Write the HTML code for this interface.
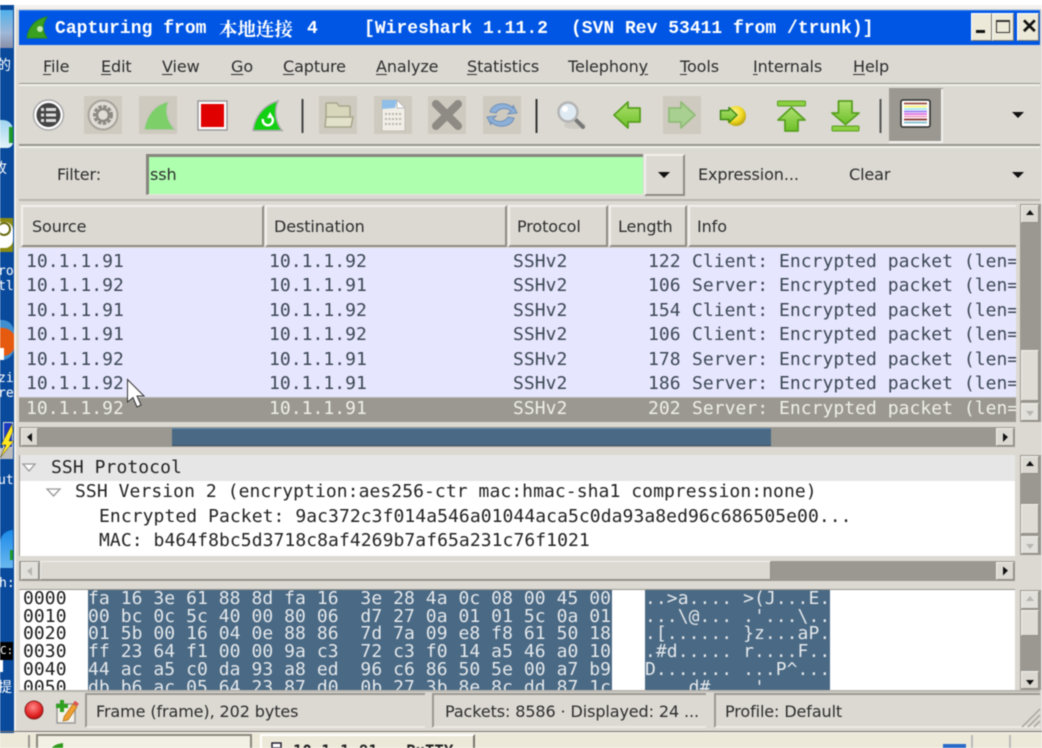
<!DOCTYPE html>
<html><head><meta charset="utf-8">
<style>
html,body{margin:0;padding:0;background:#fff}
#r{position:relative;width:1042px;height:748px;overflow:hidden;background:#fff;filter:blur(.45px);font-family:"DejaVu Sans","Liberation Sans",sans-serif;font-size:16px;color:#2c2c2c}
#r div,#r pre,#r span.a{position:absolute;margin:0}
.u{white-space:pre;line-height:20px;letter-spacing:-.1px}
u{text-underline-offset:2px}
pre.m{font-family:"DejaVu Sans Mono","Liberation Mono",monospace;font-size:18px;letter-spacing:.04px;line-height:24.5px}
pre.h{font-family:"DejaVu Sans Mono","Liberation Mono",monospace;font-size:18px;letter-spacing:.06px;line-height:17.7px}
.b{background:#dcd9d3;box-sizing:border-box;border:1px solid;border-color:#f2f0ec #8e8c84 #8e8c84 #f2f0ec}
.s{color:#efefe9}
.w{background:#ece9d8;box-sizing:border-box;border:1px solid;border-color:#fff #77756c #77756c #fff}
</style></head><body><div id="r">
<!-- desktop -->
<div style="left:0;top:5px;width:14px;height:728px;background:#0a4a9c"></div>
<div style="left:0;top:10px;width:13px;height:38px;background:linear-gradient(#4fb0ea,#9fb8d8 60%,#8a90a8)"></div>
<div class="u" style="left:-3px;top:55px;color:#fff;font:14px 'Noto Sans CJK SC',sans-serif">的</div>
<div style="left:0;top:120px;width:13px;height:28px;background:linear-gradient(#9ed4ee,#e4f2fa);border-radius:0 10px 6px 0"></div>
<div style="left:9px;top:127px;width:4px;height:16px;background:#1d9a2a"></div>
<div class="u" style="left:-7px;top:158px;color:#fff;font:14px 'Noto Sans CJK SC',sans-serif">收</div>
<div style="left:0;top:218px;width:13px;height:34px;background:#8a8a14"></div>
<div style="left:0;top:222px;width:13px;height:26px;background:#fff;border-radius:0 8px 8px 0"></div>
<div style="left:-3px;top:222px;width:14px;height:14px;border:2px solid #6a6a10;border-radius:50%;background:#fff;box-sizing:border-box"></div>
<pre class="m" style="left:-2px;top:264px;color:#fff;font-size:13px;line-height:15px">ro
tl</pre>
<div style="left:0;top:320px;width:14px;height:40px;background:radial-gradient(circle at 2px 22px,#e65a10 55%,#3f8fd0 58%);border-radius:0 12px 12px 0"></div>
<div style="left:0;top:348px;width:4px;height:12px;background:#fff"></div>
<pre class="m" style="left:-2px;top:371px;color:#fff;font-size:13px;line-height:15px">zi
re</pre>
<div style="left:3px;top:422px;width:10px;height:26px;background:#1a3ac0;border:1px solid #ddd;box-sizing:border-box"></div>
<div style="left:0;top:448px;width:13px;height:11px;background:#bbb"></div>
<pre class="m" style="left:-2px;top:473px;color:#fff;font-size:13px;line-height:15px">ut</pre>
<div style="left:0;top:530px;width:13px;height:38px;background:linear-gradient(#1c8ae8,#6ab8ef);border-radius:13px 0 0 0"></div>
<div style="left:10px;top:550px;width:3px;height:10px;background:#1d9a2a"></div>
<pre class="m" style="left:-1px;top:576px;color:#fff;font-size:13px;line-height:15px">h:</pre>
<div style="left:0;top:642px;width:13px;height:18px;background:#000"></div>
<pre class="m" style="left:0;top:643px;color:#fff;font-size:11px;line-height:15px">C:\</pre>
<div style="left:0;top:660px;width:3px;height:12px;background:#fff"></div>
<div class="u" style="left:-2px;top:677px;color:#fff;font:14px 'Noto Sans CJK SC',sans-serif">提</div>
<!-- window -->
<div style="left:14px;top:5px;width:1028px;height:728px;background:#f4f2ee"></div>
<div style="left:16px;top:9px;width:1026px;height:722px;background:#dcd9d3"></div>
<div style="left:19px;top:10px;width:1021px;height:35px;background:#0056e4;border-top:1px solid #2a78ee;box-sizing:border-box"></div>
<pre style="left:55px;top:18px;color:#fff;font:bold 18px/22px 'Liberation Mono',monospace;letter-spacing:.02px">Capturing from</pre>
<div style="left:219px;top:16px;color:#fff;font:bold 18.5px/26px 'Noto Serif CJK SC',serif;white-space:pre">本地连接</div>
<pre style="left:307px;top:18px;color:#fff;font:bold 18px/22px 'Liberation Mono',monospace">4</pre>
<pre style="left:364px;top:18px;color:#fff;font:bold 18px/22px 'Liberation Mono',monospace;letter-spacing:.02px">[Wireshark 1.11.2</pre>
<pre style="left:571px;top:18px;color:#fff;font:bold 18px/22px 'Liberation Mono',monospace;letter-spacing:0">(SVN Rev 53411 from /trunk)]</pre>
<div class="w" style="left:971px;top:13px;width:21px;height:28px"></div>
<div class="w" style="left:992px;top:13px;width:22px;height:28px"></div>
<div class="w" style="left:1017px;top:13px;width:22px;height:28px"></div>
<div style="left:976px;top:30px;width:9px;height:3px;background:#111"></div>
<div style="left:996px;top:20px;width:14px;height:13px;border:1px solid #333;border-top-width:2px;box-sizing:border-box"></div>
<div style="left:1021px;top:15px;font:bold 20px/24px 'Liberation Sans',sans-serif;color:#111">✕</div>
<!-- menu -->
<div style="left:19px;top:83px;width:1021px;height:1px;background:#98968e"></div>
<div style="left:19px;top:84px;width:1021px;height:2px;background:#f0eeea"></div>
<div style="left:19px;top:144px;width:1021px;height:2px;background:#98968e"></div>
<div style="left:19px;top:146px;width:1021px;height:2px;background:#f0eeea"></div>
<div style="left:19px;top:199px;width:1021px;height:2px;background:#b8b5ae"></div>
<div class="u" style="left:43px;top:57px"><u>F</u>ile</div>
<div class="u" style="left:101px;top:57px"><u>E</u>dit</div>
<div class="u" style="left:162px;top:57px"><u>V</u>iew</div>
<div class="u" style="left:231px;top:57px"><u>G</u>o</div>
<div class="u" style="left:283px;top:57px"><u>C</u>apture</div>
<div class="u" style="left:376px;top:57px"><u>A</u>nalyze</div>
<div class="u" style="left:467px;top:57px"><u>S</u>tatistics</div>
<div class="u" style="left:568px;top:57px">Telephon<u>y</u></div>
<div class="u" style="left:680px;top:57px"><u>T</u>ools</div>
<div class="u" style="left:753px;top:57px"><u>I</u>nternals</div>
<div class="u" style="left:853px;top:57px"><u>H</u>elp</div>
<!-- filter -->
<div class="u" style="left:57px;top:165px">Filter:</div>
<div style="left:146px;top:154px;width:497px;height:41px;background:#aeffae;box-sizing:border-box;border-top:3px solid #87857d;border-left:3px solid #87857d;border-bottom:1px solid #e8e6e0"></div>
<div class="u" style="left:150px;top:165px">ssh</div>
<div class="b" style="left:644px;top:154px;width:41px;height:42px;border-width:2px"></div>
<div class="u" style="left:698px;top:165px">Expression...</div>
<div class="u" style="left:849px;top:165px">Clear</div>
<!-- header -->
<div class="b" style="left:21px;top:205px;width:243px;height:42px;border-width:2px"></div>
<div class="b" style="left:265px;top:205px;width:242px;height:42px;border-width:2px"></div>
<div class="b" style="left:508px;top:205px;width:100px;height:42px;border-width:2px"></div>
<div class="b" style="left:609px;top:205px;width:78px;height:42px;border-width:2px"></div>
<div class="b" style="left:688px;top:205px;width:328px;height:42px;border-width:2px;border-right:0"></div>
<div class="u" style="left:32px;top:217px">Source</div>
<div class="u" style="left:274px;top:217px">Destination</div>
<div class="u" style="left:517px;top:217px">Protocol</div>
<div class="u" style="left:618px;top:217px">Length</div>
<div class="u" style="left:697px;top:217px">Info</div>
<!-- rows -->
<div style="left:19px;top:248px;width:997px;height:150px;background:#e7e6ff"></div>
<div style="left:19px;top:397px;width:997px;height:25px;background:#9a9890;border-top:1px solid #b8b6ae;box-sizing:border-box"></div>
<div style="left:0;top:248px;width:1016px;height:174px;overflow:hidden;color:#3c4854">
<pre class="m" style="left:26px;top:1.500px">10.1.1.91
10.1.1.92
10.1.1.91
10.1.1.91
10.1.1.92
10.1.1.92
<span class="s">10.1.1.92</span></pre>
<pre class="m" style="left:269px;top:1.500px">10.1.1.92
10.1.1.91
10.1.1.92
10.1.1.92
10.1.1.91
10.1.1.91
<span class="s">10.1.1.91</span></pre>
<pre class="m" style="left:513px;top:1.500px">SSHv2
SSHv2
SSHv2
SSHv2
SSHv2
SSHv2
<span class="s">SSHv2</span></pre>
<pre class="m" style="left:648px;top:1.500px">122
106
154
106
178
186
<span class="s">202</span></pre>
<pre class="m" style="left:692px;top:1.500px">Client: Encrypted packet (len=
Server: Encrypted packet (len=
Client: Encrypted packet (len=
Client: Encrypted packet (len=
Server: Encrypted packet (len=
Server: Encrypted packet (len=
<span class="s">Server: Encrypted packet (len=</span></pre>
</div>
<!-- packet list scrollbars -->
<div style="left:1020px;top:204px;width:21px;height:218px;background:#9a9890"></div>
<div class="b" style="left:1021px;top:205px;width:18px;height:18px"></div>
<div class="b" style="left:1021px;top:350px;width:18px;height:51px;background:#dfdcd6"></div>
<div class="b" style="left:1021px;top:403px;width:18px;height:18px;background:#e2e0da"></div>
<div style="left:19px;top:427px;width:996px;height:20px;background:#9a9890"></div>
<div style="left:172px;top:428px;width:599px;height:18px;background:#4a6984;border-top:1px solid #5f8cb0;border-bottom:1px solid #38506a;box-sizing:border-box"></div>
<div class="b" style="left:21px;top:428px;width:17px;height:18px"></div>
<div class="b" style="left:996px;top:428px;width:18px;height:18px"></div>
<!-- details -->
<div style="left:20px;top:455px;width:995px;height:101px;background:#fff"></div>
<div style="left:20px;top:455px;width:995px;height:26px;background:#e6e6e6"></div>
<div style="left:19px;top:455px;width:1px;height:101px;background:#98968e"></div>
<div style="left:0;top:455px;width:1016px;height:100px;color:#222;overflow:hidden">
<pre class="m" style="left:51px;top:1px;letter-spacing:.07px">SSH Protocol</pre>
<pre class="m" style="left:75px;top:25px;letter-spacing:.07px">SSH Version 2 (encryption:aes256-ctr mac:hmac-sha1 compression:none)</pre>
<pre class="m" style="left:99px;top:50px;letter-spacing:.07px">Encrypted Packet: 9ac372c3f014a546a01044aca5c0da93a8ed96c686505e00...</pre>
<pre class="m" style="left:99px;top:74px;letter-spacing:.07px">MAC: b464f8bc5d3718c8af4269b7af65a231c76f1021</pre>
</div>
<div style="left:1020px;top:455px;width:21px;height:100px;background:#9a9890"></div>
<div class="b" style="left:1021px;top:456px;width:18px;height:18px"></div>
<div class="b" style="left:1021px;top:504px;width:18px;height:30px;background:#dfdcd6"></div>
<div class="b" style="left:1021px;top:536px;width:18px;height:18px;background:#e2e0da"></div>
<div style="left:19px;top:561px;width:996px;height:20px;background:#9a9890"></div>
<div class="b" style="left:40px;top:561px;width:731px;height:19px;background:#dcd9d3"></div>
<div class="b" style="left:21px;top:562px;width:18px;height:18px;background:#e2e0da"></div>
<div class="b" style="left:996px;top:562px;width:18px;height:18px"></div>
<!-- hex -->
<div style="left:20px;top:590px;width:995px;height:100px;background:#fff"></div>
<div style="left:19px;top:589px;width:996px;height:1px;background:#98968e"></div>
<div style="left:88px;top:590px;width:524px;height:100px;background:#4a6984"></div>
<div style="left:645px;top:590px;width:185px;height:100px;background:#4a6984"></div>
<div style="left:0;top:590px;width:1016px;height:100px;overflow:hidden">
<pre class="h" style="left:23px;top:0;color:#1c1c1c">0000
0010
0020
0030
0040
0050</pre>
<pre class="h" style="left:88px;top:0;color:#e4e8ec">fa 16 3e 61 88 8d fa 16  3e 28 4a 0c 08 00 45 00
00 bc 0c 5c 40 00 80 06  d7 27 0a 01 01 5c 0a 01
01 5b 00 16 04 0e 88 86  7d 7a 09 e8 f8 61 50 18
ff 23 64 f1 00 00 9a c3  72 c3 f0 14 a5 46 a0 10
44 ac a5 c0 da 93 a8 ed  96 c6 86 50 5e 00 a7 b9
db b6 ac 05 64 23 87 d0  0b 27 3b 8e 8c dd 87 1c</pre>
<pre class="h" style="left:645px;top:0;color:#e4e8ec">..&gt;a.... &gt;(J...E.
...\@... .'...\..
.[...... }z...aP.
.#d..... r....F..
D....... ...P^...
....d#.. .'......</pre>
</div>
<div style="left:1020px;top:590px;width:21px;height:100px;background:#9a9890"></div>
<div class="b" style="left:1021px;top:591px;width:18px;height:18px;background:#e2e0da"></div>
<div class="b" style="left:1021px;top:610px;width:18px;height:26px;background:#dfdcd6"></div>
<div class="b" style="left:1021px;top:671px;width:18px;height:18px"></div>
<!-- status -->
<div style="left:19px;top:690px;width:1021px;height:2px;background:#b8b5ae"></div>
<div style="left:85px;top:693px;width:340px;height:35px;border-left:2px solid #9a9890;border-top:2px solid #9a9890;border-bottom:2px solid #ece9e4;box-sizing:border-box"></div>
<div style="left:432px;top:693px;width:274px;height:35px;border-left:2px solid #9a9890;border-top:2px solid #9a9890;border-bottom:2px solid #ece9e4;box-sizing:border-box"></div>
<div style="left:714px;top:693px;width:326px;height:35px;border-left:2px solid #9a9890;border-top:2px solid #9a9890;border-bottom:2px solid #ece9e4;box-sizing:border-box"></div>
<div class="u" style="left:96px;top:702px">Frame (frame), 202 bytes</div>
<div class="u" style="left:445px;top:702px">Packets: 8586 · Displayed: 24 ...</div>
<div class="u" style="left:725px;top:702px">Profile: Default</div>
<!-- taskbar -->
<div style="left:0;top:731px;width:1042px;height:1px;background:#77756c"></div>
<div style="left:0;top:733px;width:1042px;height:15px;background:#ece9d8"></div>
<div style="left:36px;top:734px;width:216px;height:14px;background:#f2f0e4;border:2px solid #8a887e;border-bottom:0;box-sizing:border-box"></div>
<div style="left:260px;top:734px;width:215px;height:14px;background:#ece9d8;border:2px solid #fff;border-right-color:#77756c;border-bottom:0;box-sizing:border-box"></div>
<div style="left:943px;top:744px;width:23px;height:4px;background:#2a6ac8"></div>
<div style="left:28px;top:735px;width:2px;height:13px;background:#9a9890"></div>
<div style="left:971px;top:735px;width:2px;height:13px;background:#bbb"></div>
<div style="left:1009px;top:735px;width:2px;height:13px;background:#bbb"></div>
<pre class="m" style="left:293px;top:742px;font-size:15.600px;line-height:18px;color:#222;font-weight:bold">10.1.1.91 - PuTTY</pre>
<!-- icons -->
<svg width="1042" height="748" viewBox="0 0 1042 748" style="position:absolute;left:0;top:0" xmlns="http://www.w3.org/2000/svg">
<defs>
<linearGradient id="g" x1="0" y1="0" x2="0" y2="1"><stop offset="0" stop-color="#b0e070"/><stop offset="1" stop-color="#6cc028"/></linearGradient>
<radialGradient id="y" cx=".4" cy=".35" r=".7"><stop offset="0" stop-color="#fff7a0"/><stop offset=".6" stop-color="#f0d820"/><stop offset="1" stop-color="#b09a10"/></radialGradient>
<radialGradient id="rd" cx=".45" cy=".35" r=".7"><stop offset="0" stop-color="#f88"/><stop offset=".7" stop-color="#e02020"/><stop offset="1" stop-color="#a01010"/></radialGradient>
</defs>
<!-- title fin -->
<path d="M27 38C28 28 35 19 47 17C42 24 42 31 47 38Z" fill="#3aa020" stroke="#2a8a18"/>
<circle cx="40" cy="29" r="3" fill="#bfe8b0"/>
<!-- disabled boxes -->
<g fill="#cfcabf"><rect x="84" y="96" width="38" height="38"/><rect x="139" y="96" width="38" height="38"/><rect x="319" y="96" width="38" height="38"/><rect x="374" y="96" width="38" height="38"/><rect x="428" y="96" width="38" height="38"/><rect x="483" y="96" width="38" height="38"/><rect x="663" y="96" width="38" height="38"/></g>
<!-- list -->
<circle cx="48.500" cy="115" r="15" fill="#fff" stroke="#aaa" stroke-width="1.500"/>
<circle cx="48.500" cy="115" r="12" fill="#454545"/>
<g fill="#dedede"><rect x="41" y="108" width="3" height="3"/><rect x="41" y="113.500" width="3" height="3"/><rect x="41" y="119" width="3" height="3"/><rect x="46" y="108" width="10" height="3"/><rect x="46" y="113.500" width="10" height="3"/><rect x="46" y="119" width="10" height="3"/></g>
<!-- gear -->
<circle cx="103" cy="115" r="14.500" fill="#e0ddd6" stroke="#a8a49c" stroke-width="2"/>
<circle cx="103" cy="115" r="8.500" fill="none" stroke="#8c8a82" stroke-width="3" stroke-dasharray="3.500 1.500"/>
<circle cx="103" cy="115" r="6" fill="none" stroke="#8c8a82" stroke-width="2.500"/>
<!-- fin disabled -->
<path d="M144 130C146 115 155 104 169 101C165 110 167 122 176 130Z" fill="#7dcf6a" stroke="#c6c6bc" stroke-width="1.500"/>
<!-- stop -->
<rect x="198" y="101" width="29" height="29" fill="#fff" stroke="#999" stroke-width="1.500"/>
<rect x="201" y="104" width="23" height="23" fill="#e00000"/>
<!-- restart fin -->
<path d="M253 130.500C255 116 264 105 278 101C274 110 275 122 282 130.500Z" fill="#12d012" stroke="#aaa" stroke-width="1.500"/>
<path d="M263 119a5 5 0 1 0 9-1.500" fill="none" stroke="#fff" stroke-width="2.500"/>
<path d="M270 112l3.500 6-6.500 0Z" fill="#fff"/>
<!-- separators -->
<rect x="301.500" y="99" width="2" height="34" fill="#444"/>
<rect x="535.500" y="99" width="2" height="34" fill="#333"/>
<rect x="879.500" y="99" width="2" height="34" fill="#555"/>
<!-- folder -->
<path d="M326 126V104a1 1 0 0 1 1-1h10l2 3h10a1 1 0 0 1 1 1v19Z" fill="#d8d7bc" stroke="#a8a78c" stroke-width="1.500"/>
<path d="M325 127l1-10h27l-2 10Z" fill="#e2e1ca" stroke="#a8a78c" stroke-width="1.500"/>
<!-- doc -->
<path d="M382 100h15l8 8v23h-23Z" fill="#f0eee6" stroke="#c0beb4"/>
<path d="M382 100h15l-2 8-13 1Z" fill="#8fbfe8"/><path d="M397 100l8 8h-8Z" fill="#fff" stroke="#bbb"/>
<g stroke="#b8b6ac" stroke-width="2" stroke-dasharray="2 1.500"><path d="M385 114h17M385 119h17M385 124h17"/></g>
<!-- X -->
<path d="M436 104L458 126M458 104L436 126" stroke="#8d8b84" stroke-width="8" stroke-linecap="round"/>
<!-- reload -->
<path d="M490 112c2-9 16-11 23-4v-3l4 8-9 1 3-3c-5-4-12-3-15 2Z" fill="#8cb0d8" stroke="#7090b8"/>
<path d="M514 118c-2 9-16 11-23 4v3l-4-8 9-1-3 3c5 4 12 3 15-2Z" fill="#8cb0d8" stroke="#7090b8"/>
<!-- magnifier -->
<ellipse cx="575" cy="125" rx="11" ry="4" fill="#cdcac3"/>
<path d="M576 120L583 127" stroke="#777" stroke-width="4" stroke-linecap="round"/>
<circle cx="568" cy="112" r="9.500" fill="#dfeaf3" stroke="#b4b4b4" stroke-width="2.500"/>
<circle cx="565" cy="109" r="3" fill="#fff"/>
<!-- arrows -->
<path d="M614 115L628 102V108H640V122H628V128Z" fill="url(#g)" stroke="#58a020" stroke-width="1.800" stroke-linejoin="round"/>
<path d="M695 115L681 102V108H669V122H681V128Z" fill="#a8d090" stroke="#90bc78" stroke-width="1.800" stroke-linejoin="round"/>
<circle cx="736" cy="116" r="10" fill="url(#y)"/>
<path d="M737 115L729 107.500V110.500H720.500V119.500H729V122.500Z" fill="url(#g)" stroke="#3f8a18" stroke-width="1.500" stroke-linejoin="round"/>
<rect x="777.500" y="101" width="28" height="5" rx="1" fill="#8ccf40" stroke="#58a020"/>
<path d="M791.500 107.500L805 120H798V131H785V120H778Z" fill="url(#g)" stroke="#58a020" stroke-width="1.800" stroke-linejoin="round"/>
<path d="M838.500 101H852V113H859L845.500 124.500 832 113H838.500Z" fill="url(#g)" stroke="#58a020" stroke-width="1.800" stroke-linejoin="round"/>
<rect x="832" y="126" width="27" height="5" rx="1" fill="#8ccf40" stroke="#58a020"/>
<!-- colorize -->
<path d="M889 88h54v55h-54Z" fill="#9a9890"/>
<path d="M889 142h53v-53" fill="none" stroke="#f2f0ec" stroke-width="2"/>
<rect x="901" y="100" width="29" height="27" rx="2" fill="#fff" stroke="#2a2a2a" stroke-width="1.500"/>
<g stroke-width="1.800"><path d="M904 103.500h23" stroke="#9a4a40"/><path d="M904 106.500h23" stroke="#f6f67a"/><path d="M904 109h23" stroke="#a0e8f0"/><path d="M904 111.500h23" stroke="#9a80f0"/><path d="M904 114h23" stroke="#e070e0"/><path d="M904 116.500h23" stroke="#f0a0c8"/><path d="M904 119.500h23" stroke="#8a3030"/><path d="M904 122.500h23" stroke="#80c0d0"/></g>
<!-- triangles -->
<g fill="#111"><path d="M1012 112h12l-6 6Z"/><path d="M1012 172h12l-6 6Z"/><path d="M658 172h12l-6 6Z"/></g>
<!-- scroll arrows -->
<g fill="#111"><path d="M1030 210l4 5h-8Z"/><path d="M1030 461l4 5h-8Z"/><path d="M1030 685l4-5h-8Z"/><path d="M27 437l5-4v9Z"/><path d="M1008 437l-5-4v9Z"/><path d="M1008 570.500l-5-4v9Z"/></g>
<g fill="#b8b6ae"><path d="M1030 416l4-5h-8Z"/><path d="M1030 549l4-5h-8Z"/><path d="M27 571l5-4v9Z"/><path d="M1030 596l4 5h-8Z"/></g>
<!-- tree -->
<path d="M23 464h12l-6 7Z" fill="#fff" stroke="#999" stroke-width="1.300"/>
<path d="M47 489h13l-6.500 7Z" fill="#fff" stroke="#999" stroke-width="1.300"/>
<!-- cursor -->
<path d="M127.500 379.500V402L133 397.500L137 407L141 405L137 396H144Z" fill="#fff" stroke="#333" stroke-width="1"/>
<!-- status icons -->
<circle cx="34" cy="710" r="9" fill="url(#rd)" stroke="#8a2020"/>
<path d="M57 704h18v19H57Z" fill="#f4f2e8" stroke="#999" stroke-width="1.500"/>
<path d="M56 704h4v-4h4v4h4v4h-4v4h-4v-4h-4Z" fill="#2fa020"/>
<path d="M64 717L73 704L77 707L68 720L63 721Z" fill="#f0a030" stroke="#b07020" stroke-width=".7"/>
<path d="M74 702L78 705" stroke="#e05050" stroke-width="3"/>
<!-- lightning -->
<path d="M12 424L1 445L6 445L0 458L14 441L9 441L13 431Z" fill="#ffe820" stroke="#333" stroke-width=".5"/>
<!-- grip -->
<g stroke="#a8a59e" stroke-width="1.500"><path d="M1022 727L1040 709M1028 727L1040 715M1034 727L1040 721"/></g>
<!-- task icon -->
<path d="M52 748C54 745 57 744 63 743V748Z" fill="#2f9a1c"/>
<rect x="272" y="743" width="9" height="5" fill="#fff" stroke="#223" stroke-width="1.500"/>
</svg>
</div></body></html>
